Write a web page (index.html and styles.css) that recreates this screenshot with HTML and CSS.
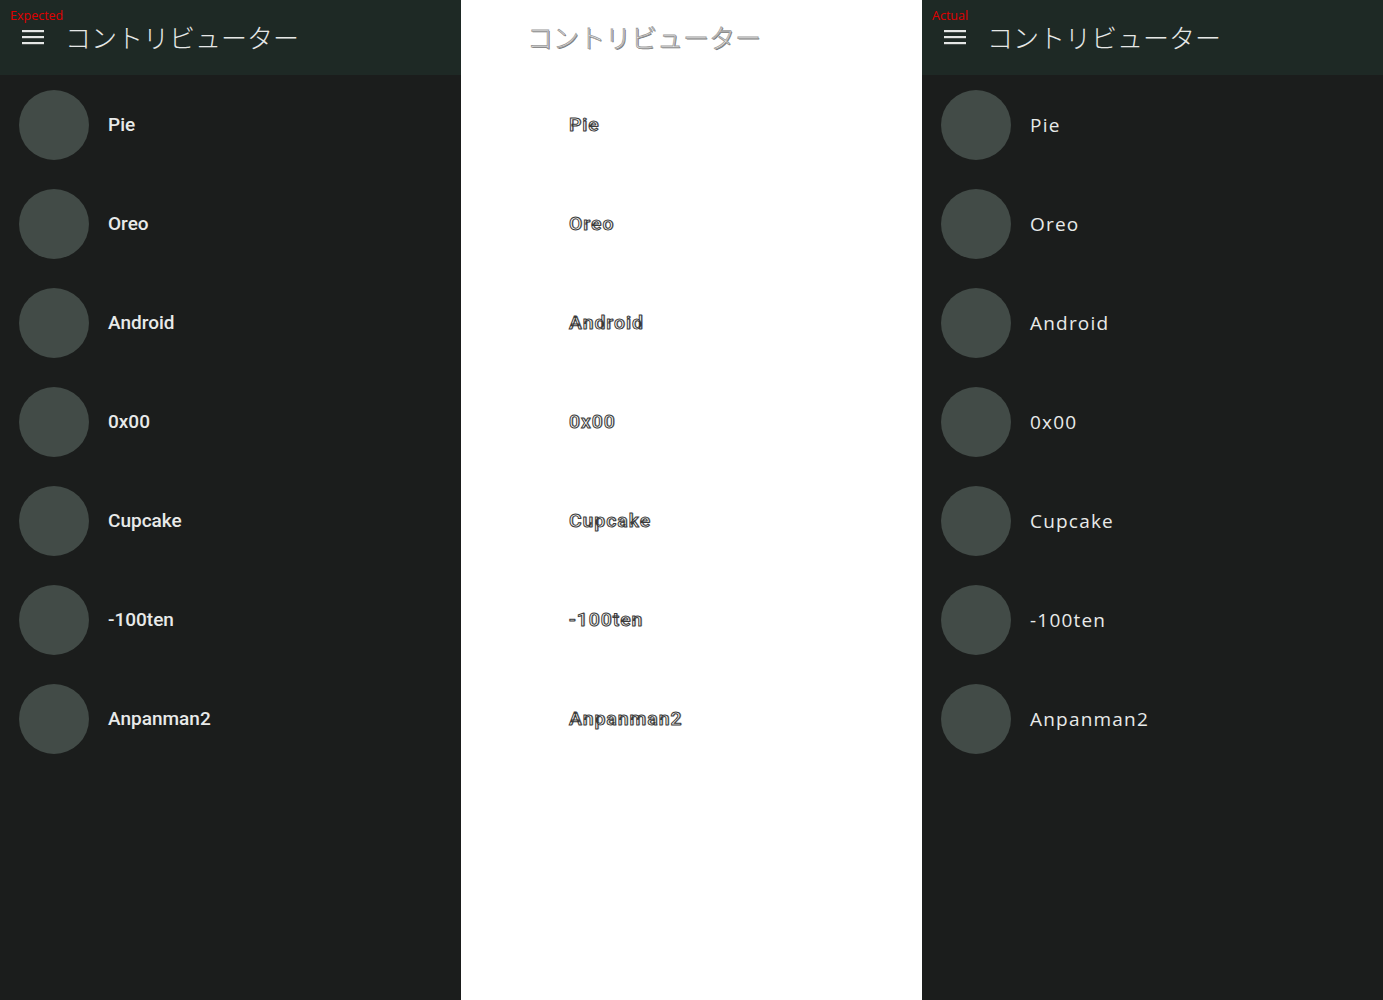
FILE: index.html
```html
<!DOCTYPE html>
<html lang="ja">
<head>
<meta charset="utf-8">
<link rel="stylesheet" href="styles.css">
</head>
<body>
<div class="panel dark">
  <div class="header">
    <span class="tag">Expected</span>
    <svg class="menu" width="22" height="16" viewBox="0 0 22 16"><rect x="0" y="1" width="22" height="2.2" fill="#e4e6e5"/><rect x="0" y="7" width="22" height="2.2" fill="#e4e6e5"/><rect x="0" y="13" width="22" height="2.2" fill="#e4e6e5"/></svg>
    <span class="title">コントリビューター</span>
  </div>
  <ul class="list exp">
    <li><span class="avatar"></span><span class="name">Pie</span></li>
    <li><span class="avatar"></span><span class="name">Oreo</span></li>
    <li><span class="avatar"></span><span class="name">Android</span></li>
    <li><span class="avatar"></span><span class="name">0x00</span></li>
    <li><span class="avatar"></span><span class="name">Cupcake</span></li>
    <li><span class="avatar"></span><span class="name">-100ten</span></li>
    <li><span class="avatar"></span><span class="name">Anpanman2</span></li>
  </ul>
</div>
<div class="panel diff">
  <div class="header">
    <span class="menu-space"></span>
    <span class="title ghost">コントリビューター</span>
  </div>
  <ul class="list dif">
    <li><span class="avatar hidden"></span><span class="name">Pie</span></li>
    <li><span class="avatar hidden"></span><span class="name">Oreo</span></li>
    <li><span class="avatar hidden"></span><span class="name">Android</span></li>
    <li><span class="avatar hidden"></span><span class="name">0x00</span></li>
    <li><span class="avatar hidden"></span><span class="name">Cupcake</span></li>
    <li><span class="avatar hidden"></span><span class="name">-100ten</span></li>
    <li><span class="avatar hidden"></span><span class="name">Anpanman2</span></li>
  </ul>
</div>
<div class="panel dark">
  <div class="header">
    <span class="tag">Actual</span>
    <svg class="menu" width="22" height="16" viewBox="0 0 22 16"><rect x="0" y="1" width="22" height="2.2" fill="#e4e6e5"/><rect x="0" y="7" width="22" height="2.2" fill="#e4e6e5"/><rect x="0" y="13" width="22" height="2.2" fill="#e4e6e5"/></svg>
    <span class="title">コントリビューター</span>
  </div>
  <ul class="list act">
    <li><span class="avatar"></span><span class="name">Pie</span></li>
    <li><span class="avatar"></span><span class="name">Oreo</span></li>
    <li><span class="avatar"></span><span class="name">Android</span></li>
    <li><span class="avatar"></span><span class="name">0x00</span></li>
    <li><span class="avatar"></span><span class="name">Cupcake</span></li>
    <li><span class="avatar"></span><span class="name">-100ten</span></li>
    <li><span class="avatar"></span><span class="name">Anpanman2</span></li>
  </ul>
</div>
</body>
</html>
```

FILE: styles.css
```css
* { box-sizing: border-box; }
html, body { margin: 0; padding: 0; }
body {
  display: flex;
  width: 1383px;
  height: 1000px;
  overflow: hidden;
  font-family: Roboto, "Noto Sans CJK JP", sans-serif;
}
.panel {
  width: 461px;
  height: 1000px;
  flex: none;
  display: flex;
  flex-direction: column;
}
.panel.dark { background: #1b1d1c; }
.panel.diff { background: #ffffff; }
.header {
  position: relative;
  height: 75px;
  flex: none;
  display: flex;
  align-items: center;
  padding-left: 22px;
  padding-bottom: 1px;
}
.dark .header { background: #1e2925; }
.tag {
  position: absolute;
  left: 10px;
  top: 8px;
  font-family: "Open Sans", sans-serif;
  font-size: 12.5px;
  line-height: 16px;
  color: #e00000;
}
.menu { flex: none; display: block; margin-right: 21px; }
.menu-space { width: 22px; flex: none; margin-right: 21px; }
.title {
  font-family: "Noto Sans CJK JP", sans-serif;
  font-weight: 300;
  font-size: 26px;
  line-height: 30px;
  color: #e6e8e7;
}
.title.ghost {
  color: #ffffff;
  -webkit-text-stroke: 0.8px #9a9a9a;
  text-shadow: 1px 1px 0 #7a7a7a;
  margin-left: 1px;
}
.list {
  list-style: none;
  margin: 0;
  padding: 15px 0 0 19px;
  display: flex;
  flex-direction: column;
  gap: 29px;
}
.list li {
  display: flex;
  align-items: center;
  height: 70px;
  gap: 19px;
}
.avatar {
  width: 70px;
  height: 70px;
  flex: none;
  border-radius: 50%;
  background: #424b47;
}
.avatar.hidden { visibility: hidden; }
.name {
  font-size: 19px;
  color: #e8eae9;
  line-height: 22px;
  white-space: nowrap;
}
.exp .name { font-family: Roboto, sans-serif; font-weight: 500; }
.act .name { font-family: "Open Sans", sans-serif; font-weight: 400; letter-spacing: 1.2px; }
.dif .name {
  font-family: Roboto, sans-serif;
  font-weight: 500;
  letter-spacing: 1.2px;
  color: #ffffff;
  -webkit-text-stroke: 1px #3a3a3a;
  text-shadow: 1px 0 0 #888;
}
```
